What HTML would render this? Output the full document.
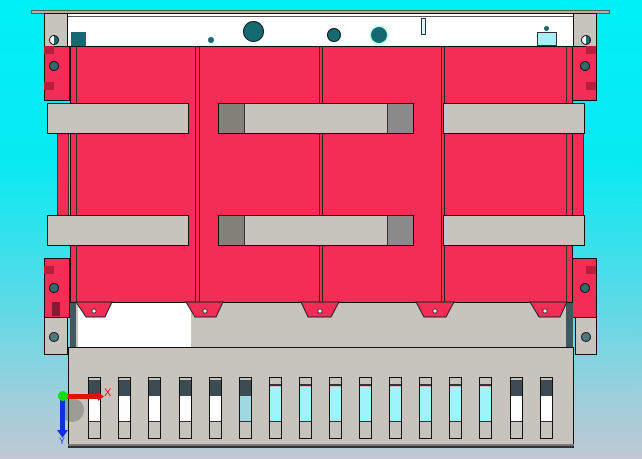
<!DOCTYPE html>
<html><head><meta charset="utf-8"><style>
*{margin:0;padding:0;box-sizing:border-box}
body{width:642px;height:459px;overflow:hidden;position:relative;font-family:"Liberation Sans",sans-serif;
background:linear-gradient(180deg,#00f0f8 0%,#08eaf2 35%,#50dce8 62%,#98d0dc 85%,#c0c8d4 100%)}
.a{position:absolute}
.red{background:#f32d55}
.g{background:#c6c4bc}
.k{border:1px solid #111}
.sl{position:absolute;top:377px;width:13px;height:62px;border:1px solid #111;background:#c6c4bc}
.sl .t{position:absolute;left:0;right:0;top:2px;height:16px;background:#3c4c52}
.sl .m{position:absolute;left:0;right:0;top:18px;height:26px;background:#fff;border-bottom:1px solid #333}
.sl.c .t{top:2px;height:6px;background:#c6c4bc;border-bottom:2px solid #333}
.sl.c .m{top:9px;height:35px;background:#9ef4fa}
</style></head><body>
<div class="a" style="left:31px;top:10px;width:579px;height:4px;background:#b0b0ac;border:1px solid #555"></div>
<div class="a" style="left:66px;top:13px;width:510px;height:34px;background:#fff;border-bottom:1px solid #111;border-top:1px solid #111"></div>
<div class="a" style="left:66px;top:16px;width:510px;height:1px;background:#555"></div>
<div class="a" style="left:243px;top:21px;width:21px;height:21px;border-radius:50%;background:#136a70;border:1px solid #111"></div>
<div class="a" style="left:208px;top:37px;width:6px;height:6px;border-radius:50%;background:#136a70"></div>
<div class="a" style="left:327px;top:28px;width:14px;height:14px;border-radius:50%;background:#136a70;border:1px solid #111"></div>
<div class="a" style="left:369px;top:25px;width:20px;height:20px;border-radius:50%;background:#136a70;border:2px solid #cfe"></div>
<div class="a" style="left:421px;top:18px;width:5px;height:17px;background:#cdf8ff;border:1px solid #333"></div>
<div class="a" style="left:544px;top:26px;width:5px;height:5px;border-radius:50%;background:#136a70"></div>
<div class="a" style="left:537px;top:32px;width:20px;height:14px;background:#a8f0f8;border:1px solid #333"></div>
<div class="a" style="left:71px;top:32px;width:15px;height:14px;background:#136a70"></div>
<div class="a g k" style="left:44px;top:13px;width:24px;height:35px"></div>
<div class="a" style="left:49px;top:35px;width:10px;height:10px;border-radius:50%;background:linear-gradient(90deg,#fff 50%,#136a70 50%);border:1px solid #111"></div>
<div class="a red k" style="left:44px;top:46px;width:26px;height:55px"></div>
<div class="a" style="left:44px;top:46px;width:10px;height:8px;background:#b8203c"></div>
<div class="a" style="left:44px;top:82px;width:10px;height:8px;background:#b8203c"></div>
<div class="a" style="left:49px;top:61px;width:10px;height:10px;border-radius:50%;background:#2e6a70;border:1px solid #111"></div>
<div class="a red k" style="left:44px;top:258px;width:26px;height:60px"></div>
<div class="a" style="left:44px;top:266px;width:10px;height:8px;background:#b8203c"></div>
<div class="a" style="left:49px;top:283px;width:10px;height:10px;border-radius:50%;background:#2e6a70;border:1px solid #111"></div>
<div class="a" style="left:52px;top:302px;width:8px;height:14px;background:#8a1830"></div>
<div class="a g k" style="left:44px;top:317px;width:24px;height:38px"></div>
<div class="a" style="left:49px;top:332px;width:10px;height:10px;border-radius:50%;background:#4e7a80;border:1px solid #111"></div>
<div class="a" style="left:57px;top:133px;width:12px;height:83px;background:#f32d55;border:1px solid #333"></div>
<div class="a g k" style="left:573px;top:13px;width:24px;height:35px"></div>
<div class="a" style="left:581px;top:35px;width:10px;height:10px;border-radius:50%;background:linear-gradient(90deg,#fff 50%,#136a70 50%);border:1px solid #111"></div>
<div class="a red k" style="left:568px;top:46px;width:29px;height:55px"></div>
<div class="a" style="left:586px;top:46px;width:10px;height:8px;background:#b8203c"></div>
<div class="a" style="left:586px;top:82px;width:10px;height:8px;background:#b8203c"></div>
<div class="a" style="left:580px;top:61px;width:10px;height:10px;border-radius:50%;background:#2e6a70;border:1px solid #111"></div>
<div class="a red k" style="left:568px;top:258px;width:29px;height:60px"></div>
<div class="a" style="left:586px;top:266px;width:10px;height:8px;background:#b8203c"></div>
<div class="a" style="left:580px;top:283px;width:10px;height:10px;border-radius:50%;background:#2e6a70;border:1px solid #111"></div>
<div class="a g k" style="left:575px;top:317px;width:22px;height:38px"></div>
<div class="a" style="left:581px;top:332px;width:10px;height:10px;border-radius:50%;background:#4e7a80;border:1px solid #111"></div>
<div class="a" style="left:572px;top:133px;width:12px;height:83px;background:#f32d55;border:1px solid #333"></div>
<div class="a" style="left:70px;top:302px;width:503px;height:46px;background:#c6c4bc"></div>
<div class="a" style="left:78px;top:302px;width:113px;height:46px;background:#fff"></div>
<div class="a" style="left:70px;top:302px;width:6px;height:48px;background:#3e5a60"></div>
<div class="a" style="left:566px;top:302px;width:7px;height:48px;background:#3e5a60"></div>
<div class="a red" style="left:70px;top:46px;width:503px;height:257px;border:1px solid #111"></div>
<div class="a" style="left:76px;top:47px;width:1px;height:255px;background:#333"></div>
<div class="a" style="left:566px;top:47px;width:1px;height:255px;background:#333"></div>
<div class="a" style="left:195px;top:47px;width:5px;height:255px;border-left:1px solid #222;border-right:1px solid #222"></div>
<div class="a" style="left:319px;top:47px;width:4px;height:255px;border-left:1px solid #222;border-right:1px solid #222"></div>
<div class="a" style="left:441px;top:47px;width:4px;height:255px;border-left:1px solid #222;border-right:1px solid #222"></div>
<svg class="a" style="left:0;top:0" width="642" height="459">
<g fill="#f32d55" stroke="#222" stroke-width="1">
<polygon points="76,302 112,302 105,317 86,317"/>
<polygon points="186,302 223,302 216,317 195,317"/>
<polygon points="301,302 339,302 331,317 308,317"/>
<polygon points="416,302 454,302 446,317 424,317"/>
<polygon points="530,302 567,302 560,317 539,317"/>
</g>
<g fill="#fff" stroke="#222" stroke-width="0.8">
<circle cx="94" cy="311" r="2"/><circle cx="205" cy="311" r="2"/><circle cx="320" cy="311" r="2"/><circle cx="435" cy="311" r="2"/><circle cx="545" cy="311" r="2"/>
</g>
</svg>
<div class="a g k" style="left:47px;top:103px;width:142px;height:31px"></div>
<div class="a g k" style="left:218px;top:103px;width:196px;height:31px"></div>
<div class="a" style="left:219px;top:104px;width:26px;height:29px;background:#828078;border-right:1px solid #333"></div>
<div class="a" style="left:387px;top:104px;width:26px;height:29px;background:#8a8a88;border-left:1px solid #333"></div>
<div class="a g k" style="left:443px;top:103px;width:142px;height:31px"></div>
<div class="a g k" style="left:47px;top:215px;width:142px;height:31px"></div>
<div class="a g k" style="left:218px;top:215px;width:196px;height:31px"></div>
<div class="a" style="left:219px;top:216px;width:26px;height:29px;background:#828078;border-right:1px solid #333"></div>
<div class="a" style="left:387px;top:216px;width:26px;height:29px;background:#8a8a88;border-left:1px solid #333"></div>
<div class="a g k" style="left:443px;top:215px;width:142px;height:31px"></div>
<div class="a g" style="left:68px;top:347px;width:506px;height:101px;border:1px solid #111;border-bottom:2px solid #333"></div>
<div class="a" style="left:68px;top:444px;width:506px;height:2px;background:#777"></div>
<div class="sl" style="left:88px"><div class="t"></div><div class="m"></div></div>
<div class="sl" style="left:118px"><div class="t"></div><div class="m"></div></div>
<div class="sl" style="left:148px"><div class="t"></div><div class="m"></div></div>
<div class="sl" style="left:179px"><div class="t"></div><div class="m"></div></div>
<div class="sl" style="left:209px"><div class="t"></div><div class="m"></div></div>
<div class="sl" style="left:239px"><div class="t"></div><div class="m" style="background:#9ed8e0"></div></div>
<div class="sl c" style="left:269px"><div class="t"></div><div class="m"></div></div>
<div class="sl c" style="left:299px"><div class="t"></div><div class="m"></div></div>
<div class="sl c" style="left:329px"><div class="t"></div><div class="m"></div></div>
<div class="sl c" style="left:359px"><div class="t"></div><div class="m"></div></div>
<div class="sl c" style="left:389px"><div class="t"></div><div class="m"></div></div>
<div class="sl c" style="left:419px"><div class="t"></div><div class="m"></div></div>
<div class="sl c" style="left:449px"><div class="t"></div><div class="m"></div></div>
<div class="sl c" style="left:479px"><div class="t"></div><div class="m"></div></div>
<div class="sl" style="left:510px"><div class="t"></div><div class="m"></div></div>
<div class="sl" style="left:540px"><div class="t"></div><div class="m"></div></div>
<svg class="a" style="left:50px;top:380px" width="70" height="65">
<circle cx="22" cy="30" r="12" fill="rgba(80,80,80,0.35)"/>
<rect x="14" y="14" width="34" height="5" fill="#e01010"/>
<polygon points="48,12 54,16.5 48,21" fill="#e01010"/>
<rect x="10" y="18" width="5" height="36" fill="#1030e0"/>
<polygon points="7,50 12.5,58 18,50" fill="#1030e0"/>
<circle cx="13" cy="16" r="5" fill="#10e010"/>
<text x="54" y="16" fill="#e01010" font-size="11" font-family="Liberation Sans">X</text>
<text x="9" y="64" fill="#1030e0" font-size="9" font-family="Liberation Sans">Y</text>
</svg>
</body></html>
